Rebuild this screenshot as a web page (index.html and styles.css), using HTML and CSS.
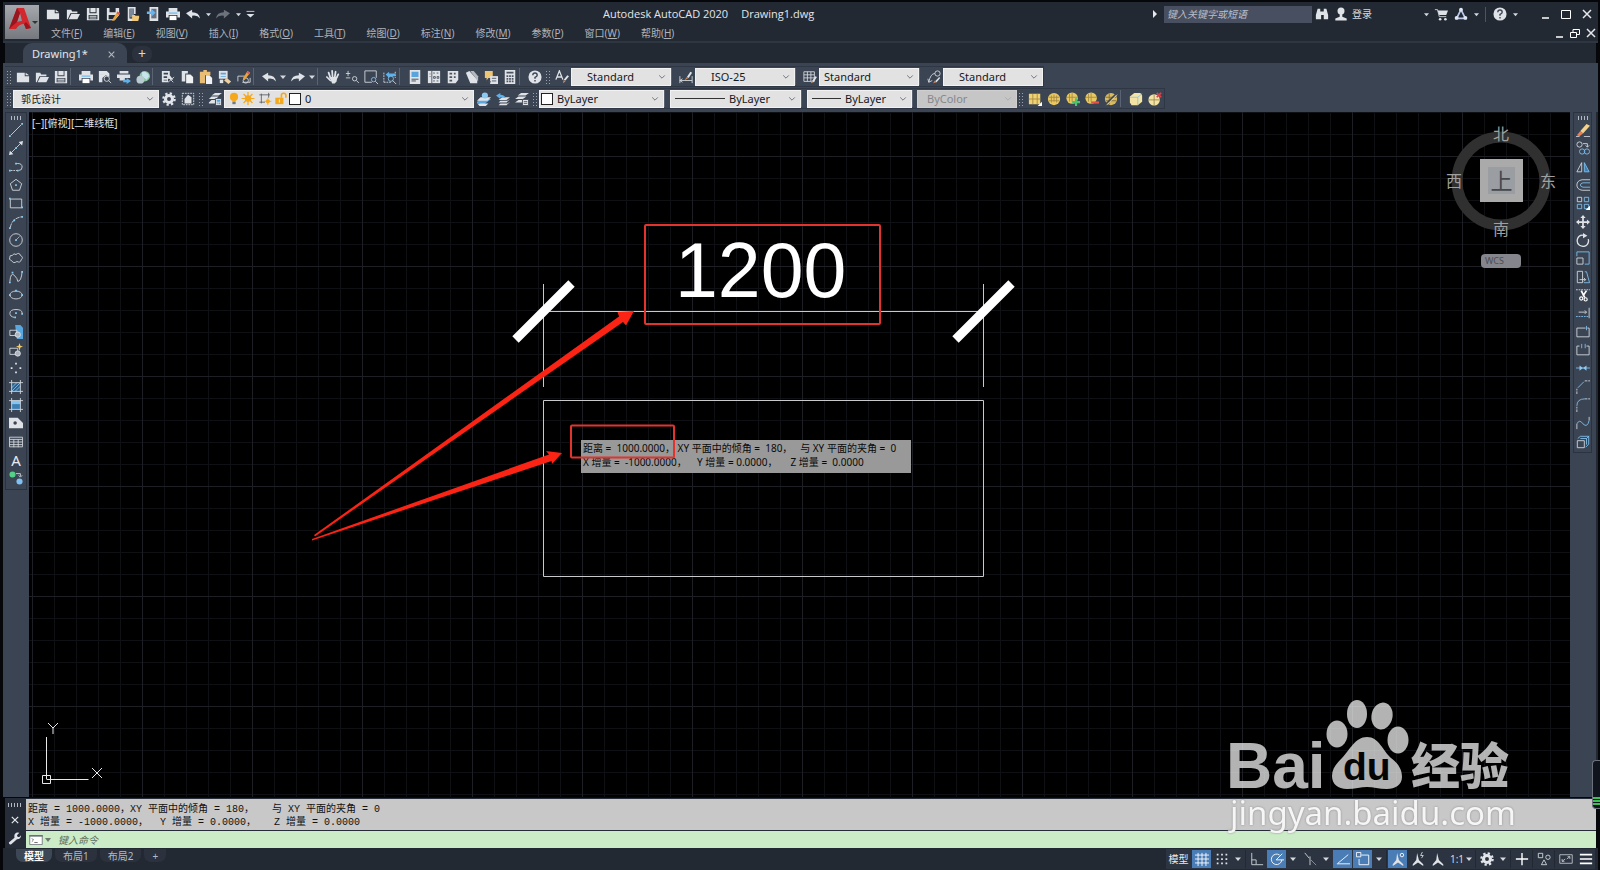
FILE: index.html
```html
<!DOCTYPE html>
<html lang="zh-CN">
<head>
<meta charset="utf-8">
<title>Autodesk AutoCAD 2020 - Drawing1.dwg</title>
<link rel="stylesheet" href="styles.css">
</head>
<body>
<svg class="sprite" aria-hidden="true">
  <defs>
    <symbol id="new" viewBox="0 0 16 16"><path class="f" d="M1 3h9v4h5v7H1zM11 3l4 3h-4z"/></symbol>
    <symbol id="open" viewBox="0 0 16 16"><path class="f" d="M1 14V3h5l1 2h6v2H5L2 14zM6 8h10l-3 6H3z"/></symbol>
    <symbol id="save" viewBox="0 0 16 16"><path class="f" fill-rule="evenodd" d="M1 1h14v14H1zM4 1v6h8V1h-1v5H5V1zM3 9v5h10V9zM4 10h8v1H4zM4 12h8v1H4z"/></symbol>
    <symbol id="saveas" viewBox="0 0 16 16"><path class="f" fill-rule="evenodd" d="M1 1h14v8l-5 6H1zM4 1v5h7V1zM3 9v5h6l4-5z"/><path fill="#e8a33d" d="M13 5l3 2-6 8-3 1 1-3z"/><path fill="#d9566b" d="M13 5l3 2-1 2-3-2z"/></symbol>
    <symbol id="phone" viewBox="0 0 16 16"><path class="f" d="M2 0h9v8H9V2H4v11h4v3H2z"/><path fill="#7c8896" d="M4 2h5v10H4z"/><path fill="#f0c878" d="M7 9h3l1 1h4v2l-1 4H7z"/></symbol>
    <symbol id="phone2" viewBox="0 0 16 16"><path class="f" d="M4 0h10v16H4z"/><path fill="#66707e" d="M6 2h6v11H6z"/><path fill="#6ab4ec" d="M1 5h5V2l5 4.500-5 4.500V8H1z"/></symbol>
    <symbol id="print" viewBox="0 0 16 16"><path class="f" d="M3 1h10v4H3zM0 5h16v7h-3V9H3v3H0z"/><path fill="#8cc8ef" d="M3 6h10v2H3z"/><path fill="#fff" d="M4 10h8v5H4z"/></symbol>
    <symbol id="preview" viewBox="0 0 16 16"><path class="f" d="M1 1h9l3 3v4L9 6 5 9v5H1z"/><circle class="s" cx="10" cy="10" r="3"/><path class="s" d="M12 12l3 3M3 5h4"/></symbol>
    <symbol id="plot" viewBox="0 0 16 16"><path class="f" d="M3 1h10v3H3zM0 5h15v4H9v3H3V9H0z"/><path fill="#5eb0ea" d="M7 11h4V9l5 3.500L11 16v-2H7z"/></symbol>
    <symbol id="globe" viewBox="0 0 16 16"><circle cx="10" cy="7" r="6" fill="#8fc9a5"/><path fill="#c9e4ef" d="M7 2q6-1 8 5l-3 4-5-4z"/><circle cx="5" cy="11" r="4.500" fill="#b8cbd0"/></symbol>
    <symbol id="cut" viewBox="0 0 16 16"><path class="f" fill-rule="evenodd" d="M1 1h9v5l4 5-6-1v4H1zM3 3v2h5V3zM3 7v2h4V7zM3 11v1h4v-1z"/><path class="s" d="M8 8l6 6M15 8l-7 6"/></symbol>
    <symbol id="copy" viewBox="0 0 16 16"><path class="f" d="M2 1h7v3H6v9H2z"/><path fill="#f0f1f3" d="M7 5h5l3 3v7H7z"/></symbol>
    <symbol id="paste" viewBox="0 0 16 16"><path fill="#e9bd73" d="M1 2h4V0h4v2h4v4H7v9H1z"/><path fill="#f0f1f3" d="M8 6h4l3 3v7H8z"/></symbol>
    <symbol id="match" viewBox="0 0 16 16"><path class="f" d="M1 1h10v9H1z"/><path fill="#5aa7e0" d="M3 3h6v2H3zM3 7h6v1H3z"/><path fill="#efcf9a" d="M10 9l5 4-3 3-5-4z"/><path class="f" d="M2 11h4v4H2z"/></symbol>
    <symbol id="bedit" viewBox="0 0 16 16"><path class="s" d="M1 13V7h8M6 14h9V9"/><circle class="s" cx="10" cy="12" r="3"/><path fill="#e8a33d" d="M12 1l3 2-6 8-2 1v-3z"/><path fill="#d9566b" d="M12 1l3 2-1 2-3-2z"/></symbol>
    <symbol id="undo" viewBox="0 0 16 16"><path class="f" d="M0 7l7-4v3q8 0 9 7-3-4-9-3v3z"/></symbol>
    <symbol id="redo" viewBox="0 0 16 16"><path class="f" d="M16 7L9 3v3q-8 0-9 7 3-4 9-3v3z"/></symbol>
    <symbol id="hand" viewBox="0 0 16 16"><path d="M5 9L3 3M7.500 8L7 1M10 8l1-6M12 9l2-4M5 12L1 8" fill="none" stroke="#dfe2e6" stroke-width="2" stroke-linecap="round"/><path class="f" d="M4 8h9l-1 5-2 2.500H7z"/></symbol>
    <symbol id="zoomrt" viewBox="0 0 16 16"><path class="s" d="M1 4h5M3.500 1v6M1 9h5"/><circle class="s" cx="11" cy="10" r="2.500"/><path class="s" d="M13 12l3 3"/></symbol>
    <symbol id="zoomwin" viewBox="0 0 16 16"><path class="s" d="M9 14H1V1h13v8"/><circle cx="11" cy="11" r="2.500" fill="none" stroke="#7fc0ee"/><path class="s" d="M13 13l3 3"/></symbol>
    <symbol id="zoomprev" viewBox="0 0 16 16"><path class="s" d="M1 14V2M14 2v7M1 14h8" stroke-dasharray="2 1"/><path fill="#5eb0ea" d="M3 5l4-3v2h7v3H7v2z"/><circle cx="9" cy="10" r="3" fill="none" stroke="#7fc0ee"/><path class="s" d="M11 12l4 4"/></symbol>
    <symbol id="props" viewBox="0 0 16 16"><path class="f" d="M2 0h12v16H2z"/><path fill="#58a4dc" d="M4 2h8v6H4z"/><path stroke="#3b4453" d="M4 10.500h8M4 12.500h5"/></symbol>
    <symbol id="dc" viewBox="0 0 16 16"><path class="f" d="M1 1h14v14H1z"/><path stroke="#4a5361" fill="none" d="M5.500 1v14M3 4.500h1M3 7.500h1M7 3.500h2M11 3.500h2M7.500 7.500h2v2h-2zM11.500 7.500h2v2h-2zM7 12.500h2M11 12.500h2"/></symbol>
    <symbol id="palette" viewBox="0 0 16 16"><path class="f" d="M2 1h12v10l-3 4H2z"/><path stroke="#4a5361" stroke-width="2" d="M4 4h3M4 8h3M4 12h3M9 4h2M9 8h2"/></symbol>
    <symbol id="sheet" viewBox="0 0 16 16"><path class="f" d="M1 3l4-2 9 10v4H6z"/><path fill="#b4b9c0" d="M6 1h4l5 6v6z"/></symbol>
    <symbol id="markup" viewBox="0 0 16 16"><path fill="#eec572" d="M1 1h9v8H5l-2 3V9H1z"/><path class="f" d="M7 7h9v9H7z"/><path stroke="#4a5361" d="M9 9.500h5M9 12.500h5M5 13.500h3"/></symbol>
    <symbol id="calc" viewBox="0 0 16 16"><path class="f" d="M2 0h12v16H2z"/><path fill="#4a5361" d="M4 2h8v2H4zM4 6h2v2H4zM7 6h2v2H7zM10 6h2v2h-2zM4 9h2v2H4zM7 9h2v2H7zM10 9h2v2h-2zM4 12h2v2H4zM7 12h2v2H7zM10 12h2v2h-2z"/></symbol>
    <symbol id="help" viewBox="0 0 16 16"><circle cx="8" cy="8" r="7.500" fill="#dfe2e6"/><path d="M5.500 6q0-2.500 2.500-2.500T10.500 6Q10.500 7.500 8 8.500v1.500M8 11.500v1.500" fill="none" stroke="#3b4453" stroke-width="1.600"/></symbol>
    <symbol id="tstyle" viewBox="0 0 16 16"><path d="M1 11L5 1l4 10M2.500 8h5" fill="none" stroke="#dfe2e6" stroke-width="1.500"/><path class="f" d="M14 6l2 1-4 5-2-1z"/><path fill="#c98a5c" d="M10 11l2 2-3 2z"/></symbol>
    <symbol id="dstyle" viewBox="0 0 16 16"><path class="s" d="M1 7v8M15 7v8M1 12h14M1 12l3-2M1 12l3 2"/><path class="f" d="M13 2l2 1-4 6-2-1z"/><path fill="#c98a5c" d="M9 8l2 1-5 3z"/></symbol>
    <symbol id="tblstyle" viewBox="0 0 16 16"><path class="s" d="M1 2h12v11H1zM1 5.500h12M1 9h12M5 2v11M9 2v11"/><path class="f" d="M14 7l2 1-4 6-2-1z"/><path fill="#c98a5c" d="M10 12l2 2-3 1z"/></symbol>
    <symbol id="mlstyle" viewBox="0 0 16 16"><circle class="s" cx="12" cy="4" r="3"/><path class="s" d="M9 4Q4 4 2 14M1 10l1 4 4-2"/><path class="f" d="M14 8l1 1-4 5-2-1z"/><path fill="#c98a5c" d="M9 12l2 2-4 1z"/></symbol>
    <symbol id="gear" viewBox="0 0 16 16"><circle cx="8" cy="8" r="4" fill="none" stroke="#e2e5e9" stroke-width="3.500"/><circle cx="8" cy="8" r="6.500" fill="none" stroke="#e2e5e9" stroke-width="2.500" stroke-dasharray="2.600 2.500"/></symbol>
    <symbol id="wssave" viewBox="0 0 16 16"><rect x="1.500" y="1.500" width="13" height="13" fill="none" stroke="#dfe2e6" stroke-dasharray="2 1"/><path class="f" d="M4 13V8l4-5 4 3v7z"/></symbol>
    <symbol id="layers" viewBox="0 0 16 16"><path class="f" d="M4 4l4-3h8l-4 3zM1 8l3-3h8l-3 3zM1 12l3-3h4v4H1z"/><path fill="#dfe2e6" stroke="#3b4453" d="M8.500 7.500h7v8h-7z"/><path fill="#58a4dc" d="M10 9h4v2h-4zM10 12h1v2h-1zM12 12h2v2h-2z"/></symbol>
    <symbol id="bulb" viewBox="0 0 16 16"><circle cx="8" cy="6" r="5" fill="#f5a81c"/><path fill="#f5a81c" d="M6 10h4v2H6z"/><path fill="#707884" d="M6 12h4v3H6z"/></symbol>
    <symbol id="sun" viewBox="0 0 16 16"><circle cx="8" cy="8" r="4" fill="#f5a81c"/><path d="M8 0v16M0 8h16M2.500 2.500l11 11M13.500 2.500l-11 11" stroke="#f5a81c" stroke-width="1.500"/></symbol>
    <symbol id="vpfreeze" viewBox="0 0 16 16"><path fill="none" stroke="#50565e" d="M3.500 2v12M1 3.500h13M1 12.500h7M12.500 1v6"/><circle cx="11.500" cy="11.500" r="2.500" fill="#f5a81c"/><path d="M11.500 7v9M7 11.500h9" stroke="#f5a81c"/></symbol>
    <symbol id="lock" viewBox="0 0 16 16"><path fill="#f5a81c" d="M1 7h10v8H1z"/><path d="M8.500 7V4q0-2.500 2.700-2.500T14 4v3" fill="none" stroke="#f5a81c" stroke-width="2"/><path stroke="#fff" d="M6 9v4"/></symbol>
    <symbol id="lay1" viewBox="0 0 16 16"><path fill="#5aa7e0" d="M0 11l4-3h12l-4 3-5 4-7-2z"/><path class="f" d="M0 10l4-4h12l-4 4zM1 14l3-1h9l-3 3H3z"/><circle cx="9" cy="4" r="3.500" fill="#8cc8ef"/></symbol>
    <symbol id="lay2" viewBox="0 0 16 16"><path class="f" d="M3 9l4-3h9l-4 3zM3 12l2-2h8l3-2-4 4zM3 15l2-2h8l3-2-4 4z"/><path fill="#5eb0ea" d="M0 4l5-3v2q5 0 6 4-2-1-6-1v2z"/></symbol>
    <symbol id="lay3" viewBox="0 0 16 16"><path class="f" d="M3 4l4-3h9l-4 3zM0 8l4-3h9l-4 3zM0 12l4-3h5v3z"/><path fill="#dfe2e6" stroke="#3b4453" d="M8.500 8.500h7v7h-7z"/><path stroke="#4a5361" d="M10 11h4M10 13h4"/></symbol>
    <symbol id="ymat" viewBox="0 0 16 16"><path fill="#efd272" d="M1 2h13v12H1z"/><path stroke="#a58a45" fill="none" d="M1 8h13M5.500 2v12M10.500 2v12"/><path fill="#fff" d="M16 11v5h-5z"/></symbol>
    <symbol id="yball" viewBox="0 0 16 16"><circle cx="8" cy="8" r="7" fill="#e9c860"/><path stroke="#a58a45" fill="none" d="M2 6h12M2 10h12M8 3v8M5 4v8M11 4v8"/></symbol>
    <symbol id="yadd" viewBox="0 0 16 16"><circle cx="7" cy="7" r="6.500" fill="#e9c860"/><path stroke="#a58a45" fill="none" d="M1 6h12M7 1v10M4 2v9"/><path stroke="#4cc36f" stroke-width="2.500" d="M11.500 7v9M7 11.500h9"/></symbol>
    <symbol id="ydel" viewBox="0 0 16 16"><circle cx="7" cy="7" r="6.500" fill="#e9c860"/><path stroke="#a58a45" fill="none" d="M1 6h12M7 1v10M4 2v9"/><path stroke="#e2534a" stroke-width="2.500" d="M7 12h9"/></symbol>
    <symbol id="yoff" viewBox="0 0 16 16"><circle cx="8" cy="8" r="7" fill="#d8bb60"/><path stroke="#7d6c3c" fill="none" d="M2 6h12M2 10h12M6 2v12"/><path stroke="#3b4453" stroke-width="2" d="M14 2L2 14"/><path stroke="#e9d8a0" d="M15 3L3 15"/></symbol>
    <symbol id="ycube" viewBox="0 0 16 16"><path fill="#f3e3a4" d="M1 5l5-4h7l2 3v7l-5 4H3l-2-3z"/><path stroke="#8ec5e0" fill="none" d="M1 6h9l5-4M10 6v9"/></symbol>
    <symbol id="yx" viewBox="0 0 16 16"><circle cx="7" cy="9" r="6.500" fill="#f3e3a4"/><path stroke="#9b8850" fill="none" d="M1 9h12M7 3v12"/><path stroke="#d9434c" stroke-width="2" d="M10 1l5 5M15 1l-5 5"/></symbol>

    <symbol id="line" viewBox="0 0 16 16"><path class="s" d="M2 14L14 2"/><path class="b" d="M0 14h2v2H0zM14 0h2v2h-2z"/></symbol>
    <symbol id="xline" viewBox="0 0 16 16"><path class="s" d="M2 14L14 2"/><path class="f" d="M0 16l1-5 4 4zM16 0l-1 5-4-4z"/><path class="b" d="M7 7h2v2H7z"/></symbol>
    <symbol id="pline" viewBox="0 0 16 16"><path class="s" d="M8 4h2q5 0 5 4t-4 4"/><path class="s" stroke-dasharray="2 1" d="M2 12h8"/><path class="b" d="M0 11h2v2H0zM9 11h2v2H9zM7 3h2v2H7z"/></symbol>
    <symbol id="poly" viewBox="0 0 16 16"><path class="s" d="M8 1.500l6.500 5L12 14H4L1.500 6.500z"/><path class="b" d="M7 7h2v2H7z"/></symbol>
    <symbol id="rect" viewBox="0 0 16 16"><path class="s" d="M1.500 3.500h13v10h-13z"/><path class="b" d="M0 2h2v2H0zM14 12h2v2h-2z"/></symbol>
    <symbol id="arc" viewBox="0 0 16 16"><path class="s" stroke-dasharray="5 1" d="M1.500 14.500Q3 4 14.500 2"/><path class="b" d="M0 14h2v2H0zM5 5h2v2H5zM14 1h2v2h-2z"/></symbol>
    <symbol id="circle" viewBox="0 0 16 16"><circle class="s" cx="8" cy="8" r="7.200"/><path stroke="#7fc0ee" d="M8 8l4-4"/><path class="b" d="M7 7h2v2H7z"/></symbol>
    <symbol id="cloud" viewBox="0 0 16 16"><path class="s" d="M4 5q1-3 4-1 4-3 5 1 4 2 1 5-1 4-5 2-4 3-6-1-4-1-2-4-1-2 3-2z"/></symbol>
    <symbol id="spline" viewBox="0 0 16 16"><path class="s" d="M1 13Q2 2 6 6t4 7Q14 13 15 2"/><path class="b" d="M0 13h2v2H0zM3 2h2v2H3zM14 1h2v2h-2z"/></symbol>
    <symbol id="ellipse" viewBox="0 0 16 16"><ellipse class="s" cx="8" cy="8" rx="7" ry="4.500"/><path class="b" d="M0 7h2v2H0zM7 2h2v2H7zM14 7h2v2h-2z"/></symbol>
    <symbol id="earc" viewBox="0 0 16 16"><path class="s" d="M6 13Q1 12 1 8.500 1 4 8 4t7 4"/><path class="b" d="M6 12h2v2H6zM7 7h2v2H7zM14 8h2v2h-2z"/></symbol>
    <symbol id="insert" viewBox="0 0 16 16"><path fill="#5aa7e0" d="M7 0h6l3 3v13H9z"/><path class="s" d="M1 6h8v6H1z"/><circle cx="10" cy="11" r="3" fill="#aeb5be" stroke="#dfe2e6"/></symbol>
    <symbol id="block" viewBox="0 0 16 16"><path class="s" d="M1 6h9v7H1z"/><circle cx="10" cy="12" r="3" fill="#aeb5be" stroke="#dfe2e6"/><path fill="#f5cb62" d="M12 0l1 3 3 1-3 1-1 4-1-4-3-1 3-1z"/></symbol>
    <symbol id="point" viewBox="0 0 16 16"><path class="f" d="M7 2h2v2H7zM2 7h2v2H2zM12 7h2v2h-2zM7 12h2v2H7z"/></symbol>
    <symbol id="hatch" viewBox="0 0 16 16"><path fill="#2f5f88" d="M3 3h10v10H3z"/><path stroke="#7fc0ee" d="M3 9l6-6M3 13L13 3M7 13l6-6"/><path class="s" d="M3 0v16M13 0v16M0 3h16M0 13h16"/></symbol>
    <symbol id="grad" viewBox="0 0 16 16"><path fill="#3b7fb5" d="M3 3h10v10H3z"/><path fill="#85c4ee" d="M3 3h10v4H3z"/><path class="s" d="M3 0v16M13 0v16M0 3h16M0 13h16"/></symbol>
    <symbol id="region" viewBox="0 0 16 16"><path class="f" fill-rule="evenodd" d="M0 2h10l6 6v6H0zM7 6a2 2 0 100 4 2 2 0 000-4z"/></symbol>
    <symbol id="table" viewBox="0 0 16 16"><path class="s" d="M.5 2.500h15v11H.5zM.5 5h15M.5 8h15M.5 11h15M5.500 5v9M10.500 5v9"/></symbol>
    <symbol id="addsel" viewBox="0 0 16 16"><circle cx="4" cy="4" r="3.500" fill="#55d088"/><circle cx="12" cy="12" r="3.500" fill="#7fc0f5"/><path class="s" d="M8 3h5v3M11 5l2 2 2-2"/></symbol>

    <symbol id="erase" viewBox="0 0 16 16"><path fill="#f2d28a" d="M12 1l4 2-8 9-3-3z"/><path fill="#ec7f55" d="M5 9l3 3-4 3-3-1z"/><path class="s" d="M0 15.500h4M9 15.500h7"/></symbol>
    <symbol id="mcopy" viewBox="0 0 16 16"><circle class="s" cx="4" cy="4" r="3"/><circle class="c" cx="7" cy="12" r="3"/><circle class="c" cx="12.500" cy="12" r="3"/><path class="s" d="M8 3h5v4M11 5l2 2 2-2"/></symbol>
    <symbol id="mirror" viewBox="0 0 16 16"><path class="s" d="M6.500 3v10.500H1z"/><path fill="#3f7fb4" stroke="#7fc0ee" d="M9.500 3v10.500H15z"/></symbol>
    <symbol id="offset" viewBox="0 0 16 16"><path class="s" d="M16 2H7Q1 3 1 8t6 6h9"/><path class="c" d="M16 5.500H8Q5 6 5 8t3 2.500h8"/></symbol>
    <symbol id="array" viewBox="0 0 16 16"><path class="s" d="M1.500 1.500h5v5h-5z"/><path class="c" d="M9.500 1.500h5v5h-5zM1.500 9.500h5v5h-5zM9.500 9.500h5v5h-5z"/><path fill="#fff" d="M16 11v5h-5z"/></symbol>
    <symbol id="move" viewBox="0 0 16 16"><path class="f" d="M8 0l3 3.500H9V7h3.500V5L16 8l-3.500 3V9H9v3.500h2L8 16l-3-3.500h2V9H3.500v2L0 8l3.500-3v2H7V3.500H5z"/></symbol>
    <symbol id="rotate" viewBox="0 0 16 16"><path d="M10 3Q4 1 2 6t2 8q6 3 9-1 2-3 1-6" fill="none" stroke="#dfe2e6" stroke-width="1.500"/><path class="f" d="M8 0l5 3-5 3z"/></symbol>
    <symbol id="scale" viewBox="0 0 16 16"><path class="c" d="M1 6V1h14v14h-5"/><path class="s" d="M1 8h7v7H1z"/></symbol>
    <symbol id="stretch" viewBox="0 0 16 16"><path class="s" d="M1.500 1.500h6v13h-6zM4 11h7M9 9l2 2-2 2"/><path class="c" d="M10 2h2l3.500 12.500H9"/></symbol>
    <symbol id="trim" viewBox="0 0 16 16"><path class="s" stroke-dasharray="2 1" d="M0 2h16"/><path d="M6 3l4 8M12 3L8 9" stroke="#fff" stroke-width="2"/><circle cx="6" cy="12" r="1.800" fill="none" stroke="#fff" stroke-width="1.300"/><circle cx="11" cy="13" r="1.800" fill="none" stroke="#fff" stroke-width="1.300"/></symbol>
    <symbol id="extend" viewBox="0 0 16 16"><path class="s" d="M15 2v12M3 7h9M10 5l2 2-2 2"/><path class="c" stroke-dasharray="2 1" d="M0 12h14"/></symbol>
    <symbol id="brk1" viewBox="0 0 16 16"><path class="s" d="M11 3.500H1v10h14v-10h-2"/><path class="c" d="M12 1v5"/></symbol>
    <symbol id="brk2" viewBox="0 0 16 16"><path class="s" d="M4 3.500H1v10h14v-10h-3"/><path class="c" d="M6.500 1v5M10.500 1v5"/></symbol>
    <symbol id="join" viewBox="0 0 16 16"><path class="c" d="M0 8h16"/><path class="b" d="M4 5l4 3-4 3zM12 5L8 8l4 3z"/></symbol>
    <symbol id="chamfer" viewBox="0 0 16 16"><path class="s" stroke-dasharray="3 1" d="M1 16v-6M10 1h6"/><path class="c" d="M2 9l7-7"/></symbol>
    <symbol id="fillet" viewBox="0 0 16 16"><path class="s" stroke-dasharray="3 1" d="M1 16v-6M10 1h6"/><path class="c" d="M1 9q0-8 9-8"/></symbol>
    <symbol id="blend" viewBox="0 0 16 16"><path class="s" d="M1 15v-6M15 1v4"/><path class="c" d="M1 9q3-6 7 0 5 5 7-4"/></symbol>
    <symbol id="explode" viewBox="0 0 16 16"><path class="s" d="M1.500 6.500h8v8h-8z"/><path class="c" d="M2 4l3-2.500h9.500v9L11 14M5 4h7v7M12 4l3-3"/></symbol>

    <symbol id="wrench" viewBox="0 0 16 16"><path class="f" d="M1 13l7-6q-1-4 2-6 2-1 4 0l-3 3 1 2h2l2-2q0 5-5 5L4 15q-3 1-3-2z"/></symbol>
    <symbol id="prompt" viewBox="0 0 16 12"><path fill="#fff" stroke="#6b7077" d="M.5.5h15v11H.5z"/><path fill="#6b7077" d="M0 0h16v2H0z"/><path stroke="#555" fill="none" d="M3 4l2 2-2 2M6 9h4"/></symbol>
    <symbol id="gridon" viewBox="0 0 16 16"><path stroke="#fff" fill="none" d="M0 3.500h16M0 8h16M0 12.500h16M3.500 1v15M8 1v15M12.500 1v15"/></symbol>
    <symbol id="snap" viewBox="0 0 16 16"><path stroke="#dfe2e6" stroke-width="2" stroke-dasharray="2 3" d="M2 3h13M2 8h13M2 13h13"/></symbol>
    <symbol id="ortho" viewBox="0 0 16 16"><path class="s" d="M2 1v13.500h13M2 9h5v5"/></symbol>
    <symbol id="polar" viewBox="0 0 16 16"><path fill="none" stroke="#fff" d="M11 3.500A6 6 0 1013.500 9M7 9l7-7M7 9h9"/></symbol>
    <symbol id="iso" viewBox="0 0 16 16"><path class="s" d="M8 5v10M2 1l5 6"/><path stroke="#78a878" d="M9 9l6 6"/></symbol>
    <symbol id="otrack" viewBox="0 0 16 16"><path fill="none" stroke="#fff" d="M1 13.500h15M2 13L14 3"/></symbol>
    <symbol id="osnap" viewBox="0 0 16 16"><path fill="none" stroke="#fff" d="M6 3.500h8.500v11h-11V8M.5.5h5v5h-5z"/></symbol>
    <symbol id="anno" viewBox="0 0 16 16"><path class="f" d="M7 1l2 8 5 5v2l-6-4-6 4v-2l4-5z"/></symbol>
    <symbol id="custom" viewBox="0 0 16 16"><path class="s" d="M1.500 1.500h5v5h-5zM5 14.500h6L8 9z"/><circle class="s" cx="12.500" cy="6" r="2.500"/></symbol>
    <symbol id="full" viewBox="0 0 18 14"><path class="s" d="M1 1.500h16v11H1zM4 10l4-3M14 4l-4 3M4 7v3h3M14 7V4h-3"/></symbol>
    <symbol id="chev" viewBox="0 0 10 10"><path d="M1.500 3L5 6.500 8.500 3" fill="none" stroke="#555b63"/></symbol>
    <symbol id="tri" viewBox="0 0 6 6"><path fill="#d5d9de" d="M0 1.500h6L3 5z"/></symbol>
    <symbol id="x" viewBox="0 0 10 10"><path d="M1 1l8 8M9 1L1 9" stroke="#e6e8eb" stroke-width="1.500"/></symbol>
  </defs>
</svg>

<div class="app">
  <header class="title">
    <button class="logo" aria-label="应用程序菜单">
      <svg viewBox="0 0 32 32"><path fill="#d3272d" fill-rule="evenodd" d="M3 23L11 2h7l7 20-5 1-2-5q-5 0-8 5zM14 7l-3 9q3-1 5-1z"/><path fill="#97161f" d="M11 2l3 5-3 9-8 7zM18 18l2 5 5-1-5-6z"/><path fill="#333" d="M26 15h6l-3 3z"/></svg>
    </button>
    <div class="title-body">
      <div class="title-row">
        <div class="qat">
          <button aria-label="新建"><svg><use href="#new"/></svg></button>
          <button aria-label="打开"><svg><use href="#open"/></svg></button>
          <button aria-label="保存"><svg><use href="#save"/></svg></button>
          <button aria-label="另存为"><svg><use href="#saveas"/></svg></button>
          <button aria-label="从移动设备打开"><svg><use href="#phone"/></svg></button>
          <button aria-label="保存到移动设备"><svg><use href="#phone2"/></svg></button>
          <button aria-label="打印"><svg><use href="#print"/></svg></button>
          <button aria-label="放弃"><svg><use href="#undo"/></svg></button>
          <button class="dd" aria-label="放弃列表"><svg><use href="#tri"/></svg></button>
          <button class="dim" aria-label="重做"><svg><use href="#redo"/></svg></button>
          <button class="dd" aria-label="重做列表"><svg><use href="#tri"/></svg></button>
          <button class="more" aria-label="自定义"><svg viewBox="0 0 16 16"><path class="s" d="M4 5h9"/><path class="f" d="M4 8h9l-4.500 4z"/></svg></button>
        </div>
        <h1>Autodesk AutoCAD 2020<span>Drawing1.dwg</span></h1>
        <div class="info">
          <svg class="play" viewBox="0 0 6 8"><path fill="#e6e8eb" d="M1 0l4 4-4 4z"/></svg>
          <input class="search" type="text" placeholder="键入关键字或短语" aria-label="搜索">
          <button aria-label="搜索"><svg viewBox="0 0 16 16"><path class="f" d="M3 2h3v3h4V2h3l2 7v5h-5V9H7v5H1V9z"/></svg></button>
          <button class="login"><svg viewBox="0 0 16 16"><circle class="f" cx="8" cy="4.500" r="4"/><path class="f" d="M6.500 8h3v3l5 2v2.500h-13V13l5-2z"/></svg>登录</button>
          <span class="spacer"></span>
          <button class="dd" aria-label="登录菜单"><svg><use href="#tri"/></svg></button>
          <button aria-label="应用商店"><svg viewBox="0 0 16 16"><path class="s" d="M1 3h3l2 8h8"/><path class="f" d="M4 4h12l-2 5H6z"/><circle class="f" cx="7" cy="14" r="1.500"/><circle class="f" cx="13" cy="14" r="1.500"/></svg></button>
          <button aria-label="Autodesk"><svg viewBox="0 0 16 16"><path fill="none" stroke="#b9c8ea" stroke-width="2" d="M8 3L3 13h10z"/><circle fill="#dfe6f5" cx="8" cy="3" r="2.200"/><circle fill="#dfe6f5" cx="3" cy="12.500" r="2.200"/><circle fill="#dfe6f5" cx="13" cy="12.500" r="2.200"/></svg></button>
          <button class="dd" aria-label="更多"><svg><use href="#tri"/></svg></button>
          <i class="sep"></i>
          <button aria-label="帮助"><svg><use href="#help"/></svg></button>
          <button class="dd" aria-label="帮助菜单"><svg><use href="#tri"/></svg></button>
        </div>
        <div class="win">
          <button aria-label="最小化"><svg viewBox="0 0 10 10"><path stroke="#fff" stroke-width="1.500" d="M2 9h7"/></svg></button>
          <button aria-label="最大化"><svg viewBox="0 0 10 10"><path fill="none" stroke="#fff" d="M.5 1.500h9v8h-9z"/></svg></button>
          <button aria-label="关闭"><svg><use href="#x"/></svg></button>
        </div>
      </div>
      <nav class="menu">
        <a href="#">文件(<u>F</u>)</a><a href="#">编辑(<u>E</u>)</a><a href="#">视图(<u>V</u>)</a><a href="#">插入(<u>I</u>)</a><a href="#">格式(<u>O</u>)</a><a href="#">工具(<u>T</u>)</a><a href="#">绘图(<u>D</u>)</a><a href="#">标注(<u>N</u>)</a><a href="#">修改(<u>M</u>)</a><a href="#">参数(<u>P</u>)</a><a href="#">窗口(<u>W</u>)</a><a href="#">帮助(<u>H</u>)</a>
        <div class="docwin">
          <button aria-label="最小化图形"><svg viewBox="0 0 10 10"><path stroke="#fff" stroke-width="1.500" d="M2 9h7"/></svg></button>
          <button aria-label="还原图形"><svg viewBox="0 0 10 10"><path fill="none" stroke="#fff" d="M.5 4.500h6v5h-6zM3 4V1.500h6.500v5H7"/></svg></button>
          <button aria-label="关闭图形"><svg><use href="#x"/></svg></button>
        </div>
      </nav>
    </div>
  </header>

  <div class="filetabs">
    <div class="filetab"><span>Drawing1*</span><button aria-label="关闭标签"><svg><use href="#x"/></svg></button></div>
    <button class="addtab" aria-label="新图形">+</button>
  </div>

  <div class="bars">
    <div class="bar">
      <i class="grip"></i>
      <button aria-label="新建"><svg><use href="#new"/></svg></button>
      <button aria-label="打开"><svg><use href="#open"/></svg></button>
      <button aria-label="保存"><svg><use href="#save"/></svg></button>
      <i class="sep"></i>
      <button aria-label="打印"><svg><use href="#print"/></svg></button>
      <button aria-label="打印预览"><svg><use href="#preview"/></svg></button>
      <button aria-label="发布"><svg><use href="#plot"/></svg></button>
      <button aria-label="三维打印"><svg><use href="#globe"/></svg></button>
      <i class="sep"></i>
      <button aria-label="剪切"><svg><use href="#cut"/></svg></button>
      <button aria-label="复制"><svg><use href="#copy"/></svg></button>
      <button aria-label="粘贴"><svg><use href="#paste"/></svg></button>
      <button aria-label="特性匹配"><svg><use href="#match"/></svg></button>
      <button aria-label="块编辑器"><svg><use href="#bedit"/></svg></button>
      <i class="sep"></i>
      <button aria-label="放弃"><svg><use href="#undo"/></svg></button>
      <button class="dd" aria-label="放弃列表"><svg><use href="#tri"/></svg></button>
      <button aria-label="重做"><svg><use href="#redo"/></svg></button>
      <button class="dd" aria-label="重做列表"><svg><use href="#tri"/></svg></button>
      <i class="sep"></i>
      <button aria-label="平移"><svg><use href="#hand"/></svg></button>
      <button aria-label="实时缩放"><svg><use href="#zoomrt"/></svg></button>
      <button aria-label="窗口缩放"><svg><use href="#zoomwin"/></svg></button>
      <button aria-label="缩放上一个"><svg><use href="#zoomprev"/></svg></button>
      <i class="sep"></i>
      <button aria-label="特性"><svg><use href="#props"/></svg></button>
      <button aria-label="设计中心"><svg><use href="#dc"/></svg></button>
      <button aria-label="工具选项板"><svg><use href="#palette"/></svg></button>
      <button aria-label="图纸集"><svg><use href="#sheet"/></svg></button>
      <button aria-label="标记集"><svg><use href="#markup"/></svg></button>
      <button aria-label="计算器"><svg><use href="#calc"/></svg></button>
      <i class="sep"></i>
      <button aria-label="帮助"><svg><use href="#help"/></svg></button>
      <i class="grip"></i>
      <button aria-label="文字样式"><svg><use href="#tstyle"/></svg></button>
      <div class="combo w100 indent"><select aria-label="文字样式"><option>Standard</option></select><svg><use href="#chev"/></svg></div>
      <i class="sep thin"></i>
      <button aria-label="标注样式"><svg><use href="#dstyle"/></svg></button>
      <div class="combo w100 indent"><select aria-label="标注样式"><option>ISO-25</option></select><svg><use href="#chev"/></svg></div>
      <i class="sep thin"></i>
      <button aria-label="表格样式"><svg><use href="#tblstyle"/></svg></button>
      <div class="combo w100"><select aria-label="表格样式"><option>Standard</option></select><svg><use href="#chev"/></svg></div>
      <i class="sep thin"></i>
      <button aria-label="多重引线样式"><svg><use href="#mlstyle"/></svg></button>
      <div class="combo w100 indent"><select aria-label="多重引线样式"><option>Standard</option></select><svg><use href="#chev"/></svg></div>
    </div>
    <div class="bar">
      <i class="grip"></i>
      <div class="combo w146"><select aria-label="工作空间"><option>郭氏设计</option></select><svg><use href="#chev"/></svg></div>
      <button aria-label="工作空间设置"><svg><use href="#gear"/></svg></button>
      <button aria-label="我的工作空间"><svg><use href="#wssave"/></svg></button>
      <i class="grip"></i>
      <button aria-label="图层特性"><svg><use href="#layers"/></svg></button>
      <div class="combo w250">
        <svg class="st"><use href="#bulb"/></svg><svg class="st"><use href="#sun"/></svg><svg class="st wide"><use href="#vpfreeze"/></svg><svg class="st"><use href="#lock"/></svg><i class="swatch"></i>
        <select aria-label="图层"><option>0</option></select><svg><use href="#chev"/></svg>
      </div>
      <button aria-label="置为当前"><svg><use href="#lay1"/></svg></button>
      <button aria-label="上一个图层"><svg><use href="#lay2"/></svg></button>
      <button aria-label="图层状态"><svg><use href="#lay3"/></svg></button>
      <i class="grip"></i>
      <div class="combo w125"><i class="swatch"></i><select aria-label="颜色"><option>ByLayer</option></select><svg><use href="#chev"/></svg></div>
      <i class="sep"></i>
      <div class="combo w130"><i class="rule long"></i><select aria-label="线型"><option>ByLayer</option></select><svg><use href="#chev"/></svg></div>
      <i class="sep"></i>
      <div class="combo w104"><i class="rule"></i><select aria-label="线宽"><option>ByLayer</option></select><svg><use href="#chev"/></svg></div>
      <i class="sep thin"></i>
      <div class="combo w100 off"><select aria-label="打印样式" disabled><option>ByColor</option></select><svg><use href="#chev"/></svg></div>
      <i class="grip"></i>
      <button aria-label="平滑网格"><svg><use href="#ymat"/></svg></button>
      <button aria-label="平滑对象"><svg><use href="#yball"/></svg></button>
      <button aria-label="提高平滑度"><svg><use href="#yadd"/></svg></button>
      <button aria-label="降低平滑度"><svg><use href="#ydel"/></svg></button>
      <button aria-label="优化网格"><svg><use href="#yoff"/></svg></button>
      <i class="sep"></i>
      <button aria-label="添加锐化"><svg><use href="#ycube"/></svg></button>
      <button aria-label="删除锐化"><svg><use href="#yx"/></svg></button>
    </div>
  </div>

  <main class="work">
    <div class="side left">
      <div class="tools">
        <i class="hgrip"></i>
        <button aria-label="直线"><svg><use href="#line"/></svg></button>
        <button aria-label="构造线"><svg><use href="#xline"/></svg></button>
        <button aria-label="多段线"><svg><use href="#pline"/></svg></button>
        <button aria-label="多边形"><svg><use href="#poly"/></svg></button>
        <button aria-label="矩形"><svg><use href="#rect"/></svg></button>
        <button aria-label="圆弧"><svg><use href="#arc"/></svg></button>
        <button aria-label="圆"><svg><use href="#circle"/></svg></button>
        <button aria-label="修订云线"><svg><use href="#cloud"/></svg></button>
        <button aria-label="样条曲线"><svg><use href="#spline"/></svg></button>
        <button aria-label="椭圆"><svg><use href="#ellipse"/></svg></button>
        <button aria-label="椭圆弧"><svg><use href="#earc"/></svg></button>
        <button aria-label="插入块"><svg><use href="#insert"/></svg></button>
        <button aria-label="创建块"><svg><use href="#block"/></svg></button>
        <button aria-label="点"><svg><use href="#point"/></svg></button>
        <button aria-label="图案填充"><svg><use href="#hatch"/></svg></button>
        <button aria-label="渐变色"><svg><use href="#grad"/></svg></button>
        <button aria-label="面域"><svg><use href="#region"/></svg></button>
        <button aria-label="表格"><svg><use href="#table"/></svg></button>
        <button class="mtext" aria-label="多行文字">A</button>
        <button aria-label="添加选定对象"><svg><use href="#addsel"/></svg></button>
      </div>
    </div>

    <section class="canvas">
      <p class="viewlabel">[−][俯视][二维线框]</p>
      <svg class="drawing" width="1100" height="600" viewBox="29 112 1100 600">
        <g fill="none" stroke="#c9c9c9">
          <path d="M543.500 284v103M983.500 284v103M543 311.500h440"/>
          <path d="M543.500 400.500h440v176h-440z"/>
        </g>
        <path d="M571.500 283.500l-56 56M1011.500 283.500l-56 56" stroke="#fff" stroke-width="9"/>
        <text x="675" y="297" class="dimtext">1200</text>
      </svg>
      <div class="tip">
        <p>距离 =&nbsp; 1000.0000，&nbsp;XY 平面中的倾角 =&nbsp; 180，&nbsp;&nbsp; 与 XY 平面的夹角 = &nbsp;0</p>
        <p>X 增量 =&nbsp; -1000.0000，&nbsp;&nbsp;&nbsp; Y 增量 = 0.0000，&nbsp;&nbsp;&nbsp;&nbsp; Z 增量 = &nbsp;0.0000</p>
      </div>
      <svg class="drawing" width="1100" height="600" viewBox="29 112 1100 600">
        <rect x="645" y="225" width="235" height="99" rx="1" fill="none" stroke="#e2332c" stroke-width="2"/>
        <rect x="571" y="425.500" width="103" height="32" rx="1" fill="none" stroke="#e2332c" stroke-width="2"/>
        <path fill="#fb2314" d="M314 535L619 316.500 617.500 312 634 311 626 325.500 623 322 315 536.500z"/>
        <path fill="#fb2314" d="M312 539L549 454.500 546 451 562 453 552 464 551.500 461 312 540.500z"/>
      </svg>
      <div class="cube">
        <svg viewBox="0 0 100 100"><circle cx="50" cy="50" r="44" fill="none" stroke="#303030" stroke-width="11"/></svg>
        <span class="n">北</span><span class="w">西</span><span class="face"><b>上</b></span><span class="e">东</span><span class="s2">南</span>
      </div>
      <button class="wcs">WCS</button>
      <svg class="ucs" width="66" height="64" viewBox="0 0 66 64"><path fill="none" stroke="#e8e8e8" d="M4.500 15v42M4.500 57.500h42M.5 53.500h8v8h-8zM6 1l5 5 5-5M11 6v6M50 46l10 10M60 46L50 56"/></svg>
    </section>

    <div class="side right">
      <div class="tools">
        <i class="hgrip"></i>
        <button aria-label="删除"><svg><use href="#erase"/></svg></button>
        <button aria-label="复制"><svg><use href="#mcopy"/></svg></button>
        <button aria-label="镜像"><svg><use href="#mirror"/></svg></button>
        <button aria-label="偏移"><svg><use href="#offset"/></svg></button>
        <button aria-label="阵列"><svg><use href="#array"/></svg></button>
        <button aria-label="移动"><svg><use href="#move"/></svg></button>
        <button aria-label="旋转"><svg><use href="#rotate"/></svg></button>
        <button aria-label="缩放"><svg><use href="#scale"/></svg></button>
        <button aria-label="拉伸"><svg><use href="#stretch"/></svg></button>
        <button aria-label="修剪"><svg><use href="#trim"/></svg></button>
        <button aria-label="延伸"><svg><use href="#extend"/></svg></button>
        <button aria-label="打断于点"><svg><use href="#brk1"/></svg></button>
        <button aria-label="打断"><svg><use href="#brk2"/></svg></button>
        <button aria-label="合并"><svg><use href="#join"/></svg></button>
        <button aria-label="倒角"><svg><use href="#chamfer"/></svg></button>
        <button aria-label="圆角"><svg><use href="#fillet"/></svg></button>
        <button aria-label="光顺曲线"><svg><use href="#blend"/></svg></button>
        <button aria-label="分解"><svg><use href="#explode"/></svg></button>
      </div>
    </div>
  </main>

  <section class="cmd">
    <div class="cmd-side">
      <i class="hgrip"></i>
      <button aria-label="关闭命令行"><svg class="sm"><use href="#x"/></svg></button>
      <button aria-label="自定义命令行"><svg><use href="#wrench"/></svg></button>
    </div>
    <div class="cmd-main">
      <pre>距离 = 1000.0000，XY 平面中的倾角 = 180，   与 XY 平面的夹角 = 0
X 增量 = -1000.0000，  Y 增量 = 0.0000，   Z 增量 = 0.0000</pre>
      <label class="cmd-line"><svg class="prompt"><use href="#prompt"/></svg><svg class="arrow" viewBox="0 0 6 6"><path fill="#6b7a6b" d="M0 1h6L3 5z"/></svg><input type="text" placeholder="键入命令" aria-label="命令"></label>
    </div>
  </section>

  <footer class="status">
    <div class="layouts">
      <button class="on">模型</button><button>布局1</button><button>布局2</button><button>+</button>
    </div>
    <div class="modes">
      <button class="text">模型</button>
      <button class="hl" aria-label="栅格"><svg><use href="#gridon"/></svg></button>
      <button aria-label="捕捉"><svg><use href="#snap"/></svg></button>
      <button class="dd" aria-label="捕捉设置"><svg><use href="#tri"/></svg></button>
      <i class="gap"></i>
      <button aria-label="正交"><svg><use href="#ortho"/></svg></button>
      <button class="hl" aria-label="极轴"><svg><use href="#polar"/></svg></button>
      <button class="dd" aria-label="极轴设置"><svg><use href="#tri"/></svg></button>
      <button aria-label="等轴测"><svg><use href="#iso"/></svg></button>
      <button class="dd" aria-label="等轴测设置"><svg><use href="#tri"/></svg></button>
      <button class="hl" aria-label="对象捕捉追踪"><svg><use href="#otrack"/></svg></button>
      <button class="hl" aria-label="对象捕捉"><svg><use href="#osnap"/></svg></button>
      <button class="dd" aria-label="对象捕捉设置"><svg><use href="#tri"/></svg></button>
      <i class="gap"></i>
      <button class="hl" aria-label="注释可见性"><svg viewBox="0 0 16 16"><use href="#anno"/><circle cx="12.500" cy="3.500" r="2" fill="none" stroke="#fff"/></svg></button>
      <button aria-label="自动缩放"><svg viewBox="0 0 16 16"><use href="#anno"/><path class="s" d="M13 0l-2 4h3l-2 3"/></svg></button>
      <button aria-label="注释比例"><svg><use href="#anno"/></svg></button>
      <button class="scale">1:1 <svg><use href="#tri"/></svg></button>
      <i class="gap"></i>
      <button aria-label="切换工作空间"><svg><use href="#gear"/></svg></button>
      <button class="dd" aria-label="工作空间列表"><svg><use href="#tri"/></svg></button>
      <i class="gap"></i>
      <button aria-label="注释监视器"><svg viewBox="0 0 16 16"><path stroke="#fff" stroke-width="1.600" d="M8 1v14M1 8h14"/></svg></button>
      <i class="gap"></i>
      <button aria-label="隔离对象"><svg><use href="#custom"/></svg></button>
      <i class="gap"></i>
      <button aria-label="全屏显示"><svg><use href="#full"/></svg></button>
      <button aria-label="自定义"><svg viewBox="0 0 16 16"><path stroke="#fff" stroke-width="1.800" d="M1 3h14M1 8h14M1 13h14"/></svg></button>
    </div>
  </footer>

  <svg class="mark" width="300" height="150" viewBox="1220 690 300 150" role="img" aria-label="Baidu 经验">
    <g fill="#fff" opacity=".7">
      <text x="1226" y="788" class="bai">Bai</text>
      <ellipse cx="1337" cy="734" rx="10.500" ry="13.500"/>
      <ellipse cx="1357" cy="714" rx="10" ry="14"/>
      <ellipse cx="1382" cy="716" rx="10.500" ry="13.500" transform="rotate(12 1382 716)"/>
      <ellipse cx="1398" cy="740" rx="10.500" ry="13.500"/>
      <path d="M1367 737c12 0 16 14 24 21 8 6 11 12 11 19 0 8-7 12-15 12-8 0-14-2-20-2s-12 2-20 2c-9 0-15-5-15-13 0-7 4-12 10-18 8-8 13-21 25-21z"/>
      <text x="1411" y="784" class="jy">经验</text>
    </g>
    <text x="1343" y="780" class="du">du</text>
    <text x="1230" y="825" class="url">jingyan.baidu.com</text>
  </svg>
  <div class="meter"></div>
</div>
</body>
</html>
```

FILE: styles.css
```css
* { box-sizing: border-box; }
body {
  margin: 0;
  background: #05070a;
  color: #d5d9de;
  font: 11px/16px "Noto Sans", "Noto Sans CJK SC", sans-serif;
}
h1, p, pre { margin: 0; font-weight: 400; }
button {
  display: flex;
  align-items: center;
  justify-content: center;
  padding: 0;
  border: 0;
  background: none;
  color: inherit;
  font: inherit;
}
i { display: block; }
input, select { font: inherit; color: inherit; border: 0; padding: 0; background: none; outline: 0; }
svg { display: block; flex: none; }
.sprite { position: absolute; width: 0; height: 0; }
.f { fill: #dfe2e6; }
.s { fill: none; stroke: #d5d9de; stroke-width: 1; }
.b { fill: #8cc8f0; }
.c { fill: none; stroke: #7fc0ee; stroke-width: 1; }

.app {
  position: relative;
  display: flex;
  flex-direction: column;
  min-height: 100vh;
  padding: 2px 2px 0 3px;
  background: #05070a;
  overflow: hidden;
}

/* title bar */
.title { display: flex; background: #222933; padding: 3px 2px 0; border-bottom: 2px solid #2e3642; }
.logo { width: 34px; height: 34px; background: linear-gradient(#a5a8ac, #75797f); margin-bottom: 2px; }
.logo svg { width: 32px; height: 32px; }
.title-body { flex: 1; min-width: 0; }
.title-row { position: relative; display: flex; justify-content: space-between; height: 18px; }
.qat, .info, .win { display: flex; align-items: center; }
.qat { margin-left: 4px; }
.qat button, .info button { width: 20px; height: 18px; }
.qat svg, .info button svg { width: 14px; height: 14px; }
.qat .dd, .info .dd { width: 10px; }
.qat .dd svg, .info .dd svg { width: 5px; height: 5px; }
.qat .dim { opacity: .4; }
.qat .more { width: 14px; }
.title h1 { position: absolute; left: 564px; font: 11px/17px "Open Sans", "Noto Sans", sans-serif; color: #e2e5e9; white-space: pre; }
.title h1 span { margin-left: 13px; }
.info { margin-left: auto; }
.play { width: 6px; height: 8px; margin-right: 6px; }
.search { width: 148px; height: 17px; padding-left: 3px; background: #474f60; font-size: 10px; font-style: italic; }
.search::placeholder { color: #b9bec8; opacity: 1; }
.info .login { width: 56px; gap: 4px; margin-left: 2px; font-size: 10px; justify-content: flex-start; }
.spacer { width: 31px; }
.info .sep { height: 15px; margin: 0 4px; border-left: 1px solid #4b5462; }
.win { margin-left: 20px; gap: 11px; padding-right: 4px; }
.win svg, .docwin svg { width: 10px; height: 10px; }
.menu { display: flex; height: 18px; padding: 2px 0 0 12px; font-size: 10px; line-height: 16px; gap: 21px; }
.menu a { color: #aeb3bb; text-decoration: none; }
.docwin { display: flex; align-items: center; gap: 6px; margin-left: auto; }

/* drawing tabs */
.filetabs { display: flex; height: 20px; background: #222933; padding-left: 18px; margin: 0 2px; }
.filetab {
  display: flex;
  align-items: center;
  justify-content: space-between;
  width: 104px;
  padding: 2px 12px 0 9px;
  background: #3b4453;
  border-radius: 9px 9px 0 0;
  color: #e2e5e9;
}
.filetab svg { width: 7px; height: 7px; opacity: .7; }
.addtab { width: 20px; height: 16px; margin: 3px 0 0 5px; border-radius: 7px; background: #2b323d; font-size: 14px; }

/* toolbars */
.bars { display: flex; flex-direction: column; gap: 1px; padding: 3px 2px 3px; background: #3b4453; }
.bar { display: flex; align-items: center; align-self: flex-start; height: 21px; border: 1px solid #2f3745; border-left: 0; }
.bar button { width: 19px; height: 19px; }
.bar button svg { width: 14px; height: 14px; }
.bar .dd { width: 10px; }
.bar .dd svg { width: 6px; height: 6px; }
.bar .sep { width: 6px; height: 17px; border-left: 1px solid #5a6372; }
.bar .thin { width: 5px; }
.grip { width: 8px; height: 14px; padding: 0 1px; background: radial-gradient(circle, #9aa1ac 30%, transparent 40%) 0 0 / 3px 3px content-box; }
.combo { display: flex; align-items: center; height: 18px; background: #e2e2e2; color: #16181b; border: 1px solid #f2f2f2; padding: 0 4px; }
.combo select { flex: 1; min-width: 0; height: 16px; appearance: none; }
.combo svg { width: 8px; height: 8px; }
.combo .st { width: 14px; height: 13px; }
.combo .wide { margin: 0 2px 0 3px; }
.swatch { width: 12px; height: 12px; margin-right: 4px; background: #fff; border: 1px solid #222; }
.st + .swatch { margin-left: 1px; }
.rule { width: 29px; height: 1px; margin-right: 4px; background: #333; }
.rule.long { width: 50px; }
.w100 { width: 100px; }
.w104 { width: 105px; }
.w125 { width: 125px; padding-left: 1px; }
.w130 { width: 131px; }
.w146 { width: 146px; font-size: 10px; padding-left: 7px; }
.w250 { width: 250px; padding-left: 2px; }
.indent { padding-left: 15px; }
.off { background: #c6c6c6; border-color: #cfcfcf; padding-left: 9px; }
.off select { color: #85888d; opacity: 1; }
.off svg { opacity: .3; }

/* work area */
.work { flex: 1; display: flex; min-height: 680px; background: #3b4453; }
.left { width: 26px; padding: 0 2px; }
.right { width: 28px; padding: 0 4px 0 3px; border-right: 2px solid #222933; }
.tools { display: flex; flex-direction: column; align-items: center; padding: 3px 0 1px; border: 1px solid #2b3340; }
.hgrip { width: 12px; height: 4px; background: radial-gradient(circle, #b4bac3 30%, transparent 40%) 0 0 / 3px 2px; }
.tools .hgrip { margin-bottom: 1px; }
.tools button { width: 18px; height: 18px; }
.tools button:nth-child(3n) { margin-bottom: 1px; }
.tools svg { width: 14px; height: 14px; }
.mtext { font-size: 15px; color: #e8eaed; }

.canvas {
  position: relative;
  flex: 1;
  min-width: 0;
  overflow: hidden;
  background-color: #000;
  background-image:
    linear-gradient(#1d1f24 1px, transparent 1px),
    linear-gradient(90deg, #1d1f24 1px, transparent 1px),
    linear-gradient(#0e1013 1px, transparent 1px),
    linear-gradient(90deg, #0e1013 1px, transparent 1px);
  background-size: 110px 110px, 110px 110px, 22px 22px, 22px 22px;
  background-position: 0 44px, 3px 0, 0 0, 3px 0;
}
.viewlabel { position: absolute; left: 3px; top: 3px; font-size: 10px; color: #e2e2e2; }
.drawing { position: absolute; left: 0; top: 0; }
.dimtext { font: 77px "Liberation Sans", Arial, sans-serif; fill: #fff; }
.tip { position: absolute; left: 552px; top: 328px; width: 330px; padding: 1px 2px 4px; background: #999; color: #0a0a0a; font-size: 10px; line-height: 14px; white-space: nowrap; }
.cube { position: absolute; right: 19px; top: 19px; width: 100px; height: 100px; font-size: 16px; color: #a0a0a0; }
.cube svg { width: 100px; height: 100px; }
.cube span { position: absolute; line-height: 20px; }
.cube .n { left: 42px; top: -7px; }
.cube .s2 { left: 42px; top: 88px; }
.cube .w { left: -5px; top: 40px; }
.cube .e { left: 89px; top: 40px; }
.cube .face { left: 29px; top: 28px; width: 43px; height: 43px; padding: 8px; background: #aaa; }
.cube b { display: block; height: 27px; background: #9a9da2; color: #45484d; font: 22px/25px "Noto Sans CJK SC", sans-serif; text-align: center; }
.wcs { position: absolute; right: 49px; top: 142px; width: 40px; height: 14px; padding-left: 4px; border-radius: 4px; background: #85858d; color: #4c4c52; font-size: 9px; justify-content: flex-start; }
.ucs { position: absolute; left: 13px; bottom: 11px; }

/* command window */
.cmd { display: flex; margin: 1px 2px 0; background: #262d38; border-top: 1px solid #262d38; }
.cmd-side { display: flex; flex-direction: column; align-items: center; width: 21px; padding: 4px 2px 0 0; gap: 6px; }
.cmd-side .hgrip { width: 15px; }
.cmd-side svg { width: 13px; height: 13px; }
.cmd-side .sm { width: 8px; height: 8px; }
.cmd-side button { height: 13px; }
.cmd-main { flex: 1; display: flex; flex-direction: column; gap: 1px; }
.cmd pre { padding: 4px 2px 1px; background: #c8c8c8; color: #111; font: 10px/13px "Liberation Mono", "Noto Sans CJK SC", monospace; }
.cmd-line { display: flex; align-items: center; height: 17px; padding-left: 3px; background: #cbecc6; }
.prompt { width: 14px; height: 10px; }
.arrow { width: 6px; height: 6px; margin: 0 7px 0 2px; }
.cmd-line input { flex: 1; font-size: 10px; font-style: italic; color: #222; }
.cmd-line input::placeholder { color: #5c6b5c; opacity: 1; }

/* status bar */
.status { display: flex; justify-content: space-between; height: 22px; padding: 1px 3px 1px 2px; background: #222933; font-size: 10px; }
.layouts { display: flex; gap: 3px; padding-left: 11px; }
.layouts button { height: 13px; padding: 0 8px; border-radius: 0 0 7px 7px; background: #2b323d; color: #b4bac3; }
.layouts .on { background: #3d4857; color: #fff; font-weight: 700; }
.modes { display: flex; align-items: center; gap: 1px; background: #2c3441; }
.modes button { width: 19px; height: 18px; }
.modes svg { width: 14px; height: 14px; }
.modes .text { width: 25px; color: #e8eaed; }
.modes .hl { background: #4a7db5; }
.modes .dd { width: 12px; }
.modes .dd svg, .modes .scale svg { width: 6px; height: 6px; }
.modes .scale { width: 26px; gap: 2px; }
.gap { width: 1px; height: 18px; background: #222933; }

/* watermark and volume meter */
.mark { position: absolute; right: 80px; bottom: 30px; pointer-events: none; }
.bai { font: 700 64px "Liberation Sans", Arial, sans-serif; }
.jy { font: 900 49px "Noto Sans CJK SC", sans-serif; }
.du { font: 700 39px "Liberation Sans", Arial, sans-serif; fill: #050505; }
.url { font: 33px "Noto Sans", sans-serif; fill: #f6f6f6; filter: drop-shadow(0 0 1px #909090); }
.meter {
  position: absolute;
  right: 0;
  bottom: 61px;
  width: 8px;
  height: 49px;
  border: 1px solid #6b727c;
  border-right: 0;
  border-radius: 4px 0 0 4px;
  background: repeating-linear-gradient(#3fbf55 0 2px, #10151d 2px 3px) 0 36px / 8px 9px no-repeat #10151d;
}
```
